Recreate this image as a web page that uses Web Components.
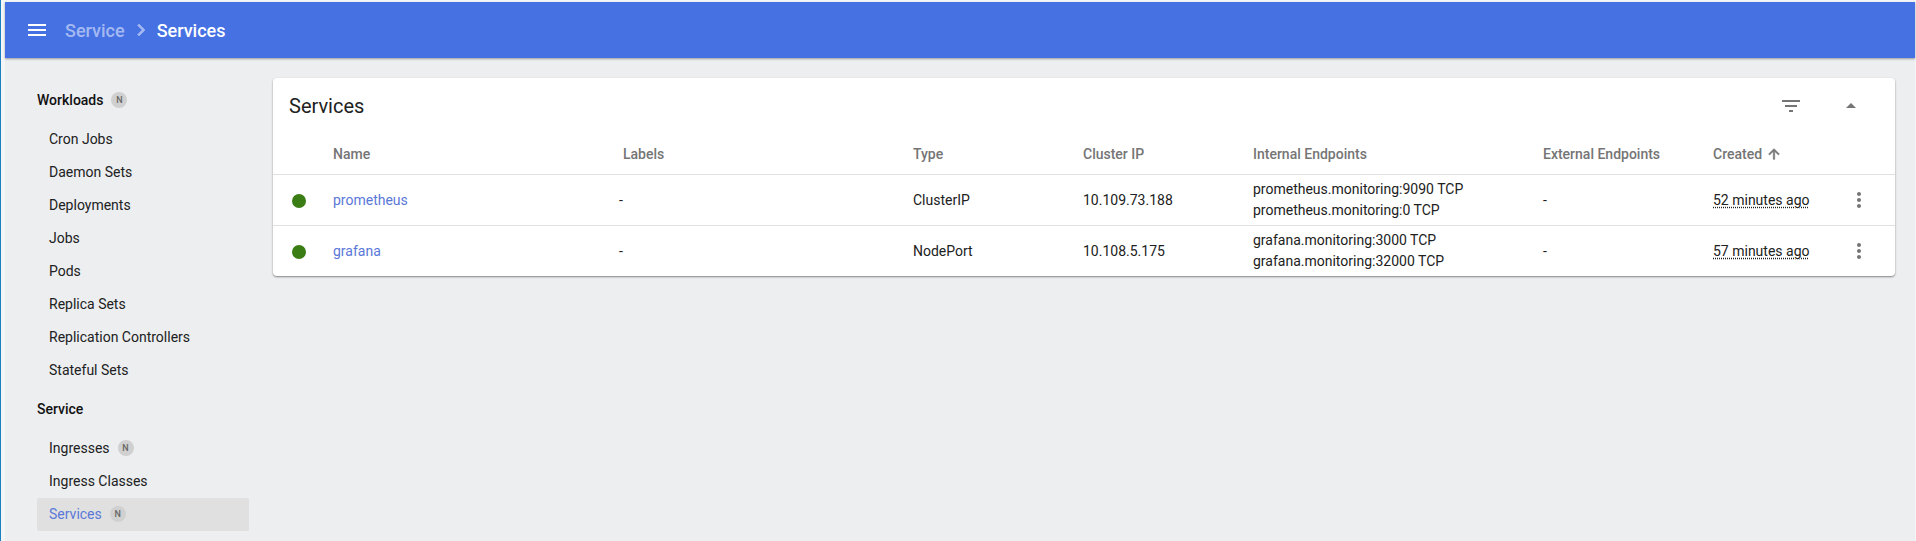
<!DOCTYPE html>
<html><head><meta charset="utf-8"><style>
html,body{margin:0;height:100%;overflow:hidden;background:#f4f5f7}
body{font-family:Roboto,"Liberation Sans",sans-serif}
</style></head><body>
<kd-app></kd-app>
<script>
class Base extends HTMLElement{
  constructor(){super();this.attachShadow({mode:'open'}).innerHTML=this.constructor.html;}
}
class KdToolbar extends Base{static html=`<style>
:host{display:flex;align-items:center;height:56px;background:#4571e3;box-shadow:0 1px 2px rgba(0,0,0,.35);position:relative;z-index:2;color:#fff;font-size:18px;font-weight:500;padding-left:20px}
svg{display:block;fill:#fff}
.m{margin-right:16px}
.p{color:#a4b9f1}
.c{margin:0 4px;fill:#a4b9f1;stroke:#a4b9f1;stroke-width:.6}
</style>
<svg class="m" width="24" height="24" viewBox="0 0 24 24"><path d="M3 18h18v-2H3v2zm0-5h18v-2H3v2zm0-7v2h18V6H3z"/></svg>
<span class="p">Service</span>
<svg class="c" width="24" height="24" viewBox="0 0 24 24"><path d="M8.6 16.6 13.2 12 8.6 7.4 10 6l6 6-6 6z"/></svg>
<span>Services</span>`}
class KdBadge extends Base{static html=`<style>
:host{display:inline-flex;align-items:center;justify-content:center;width:16px;height:16px;border-radius:50%;background:#d0d0d0;color:#666;font-size:9px;font-weight:500;margin-left:8px}
</style><slot></slot>`}
class KdNavHead extends Base{static html=`<style>
:host{display:flex;align-items:center;height:45px;box-sizing:border-box;padding-left:32px;padding-bottom:1px;font-size:14px;font-weight:500;color:#111}
</style><slot></slot>`}
class KdNavItem extends Base{static html=`<style>
:host{display:flex;align-items:center;height:33px;box-sizing:border-box;margin-left:32px;width:212px;padding:0 0 2px 12px;font-size:14px;color:#212121;border-radius:2px}
:host([active]){background:#e0e0e0;color:#5a78d8}
</style><slot></slot>`}
class KdNav extends Base{static html=`<style>
:host{display:flex;flex-direction:column;flex:none;width:268px;padding-top:20px;box-sizing:border-box}
</style>
<kd-nav-head>Workloads<kd-badge>N</kd-badge></kd-nav-head>
<kd-nav-item>Cron Jobs</kd-nav-item>
<kd-nav-item>Daemon Sets</kd-nav-item>
<kd-nav-item>Deployments</kd-nav-item>
<kd-nav-item>Jobs</kd-nav-item>
<kd-nav-item>Pods</kd-nav-item>
<kd-nav-item>Replica Sets</kd-nav-item>
<kd-nav-item>Replication Controllers</kd-nav-item>
<kd-nav-item>Stateful Sets</kd-nav-item>
<kd-nav-head>Service</kd-nav-head>
<kd-nav-item>Ingresses<kd-badge>N</kd-badge></kd-nav-item>
<kd-nav-item>Ingress Classes</kd-nav-item>
<kd-nav-item active>Services<kd-badge>N</kd-badge></kd-nav-item>`}
const cols='grid-template-columns:60px 290px 290px 170px 170px 290px 170px 1fr';
class KdRow extends Base{static html=`<style>
:host{display:grid;${cols};align-items:center;height:51px;box-sizing:border-box;border-top:1px solid #e0e0e0;font-size:14px;color:#212121;line-height:21px;position:relative}
.d{width:14px;height:14px;border-radius:50%;background:#3a7d15;margin-left:19px;margin-top:1px}
a{color:#5a78d8;text-decoration:none}
.t{text-decoration:underline dotted;text-underline-offset:2px}
svg{display:block;fill:#757575;position:absolute;right:24px;top:13px}
.l{margin-left:-4px}
</style>
<div class="d"></div>
<div><a><slot name="name"></slot></a></div>
<div class="l">-</div>
<div><slot name="type"></slot></div>
<div><slot name="ip"></slot></div>
<div><slot name="ep"></slot></div>
<div>-</div>
<div class="t"><slot name="age"></slot></div>
<svg width="24" height="24" viewBox="0 0 24 24"><path d="M12 8c1.100 0 2-.9 2-2s-.9-2-2-2-2 .9-2 2 .9 2 2 2zm0 2c-1.100 0-2 .9-2 2s.9 2 2 2 2-.9 2-2-.9-2-2-2zm0 6c-1.100 0-2 .9-2 2s.9 2 2 2 2-.9 2-2-.9-2-2-2z"/></svg>`}
class KdCard extends Base{static html=`<style>
:host{display:block;background:#fff;border-radius:4px;box-shadow:0 1px 2px rgba(0,0,0,.45)}
.t{display:flex;align-items:center;height:56px;padding-left:16px;font-size:20px;color:#212121}
.t span{flex:1}
.t svg{display:block;fill:#757575}
.h{display:grid;${cols};align-items:center;height:40px;font-size:14px;font-weight:500;color:#757575}
.a{display:inline-flex;align-items:center}
.a svg{fill:#757575;stroke:#757575;stroke-width:1;margin-left:4px}
</style>
<div class="t"><span>Services</span>
<svg width="24" height="24" viewBox="0 0 24 24" style="margin-right:36px"><path d="M10 18h4v-2h-4v2zM3 6v2h18V6H3zm3 7h12v-2H6v2z"/></svg>
<svg width="24" height="24" viewBox="0 0 24 24" style="margin-right:32px"><path d="M7 14l5-5 5 5z"/></svg></div>
<div class="h"><div></div><div>Name</div><div>Labels</div><div>Type</div><div>Cluster IP</div><div>Internal Endpoints</div><div>External Endpoints</div>
<div class="a">Created<svg width="16" height="16" viewBox="0 0 24 24"><path d="M4 12l1.410 1.410L11 7.830V20h2V7.830l5.580 5.590L20 12l-8-8-8 8z"/></svg></div></div>
<slot></slot>`}
class KdApp extends Base{static html=`<style>
:host{display:block;height:539px;margin:2px 1px 0 5px;box-sizing:border-box;position:relative;background:#eceef0}
.b{display:flex}
main{flex:1;padding:20px 20px 0 0;min-width:0}
.edge{position:absolute;left:-5px;top:-2px;bottom:0;width:1px;background:#1b80c0}
</style>
<div class="edge"></div>
<kd-toolbar></kd-toolbar>
<div class="b"><kd-nav></kd-nav><main><kd-card>
<kd-row><span slot="name">prometheus</span><span slot="type">ClusterIP</span><span slot="ip">10.109.73.188</span><span slot="ep">prometheus.monitoring:9090 TCP<br>prometheus.monitoring:0 TCP</span><span slot="age">52 minutes ago</span></kd-row>
<kd-row><span slot="name">grafana</span><span slot="type">NodePort</span><span slot="ip">10.108.5.175</span><span slot="ep">grafana.monitoring:3000 TCP<br>grafana.monitoring:32000 TCP</span><span slot="age">57 minutes ago</span></kd-row>
</kd-card></main></div>`}
const defs={'kd-badge':KdBadge,'kd-nav-head':KdNavHead,'kd-nav-item':KdNavItem,'kd-nav':KdNav,'kd-toolbar':KdToolbar,'kd-row':KdRow,'kd-card':KdCard,'kd-app':KdApp};
for(const k in defs)customElements.define(k,defs[k]);
</script></body></html>
